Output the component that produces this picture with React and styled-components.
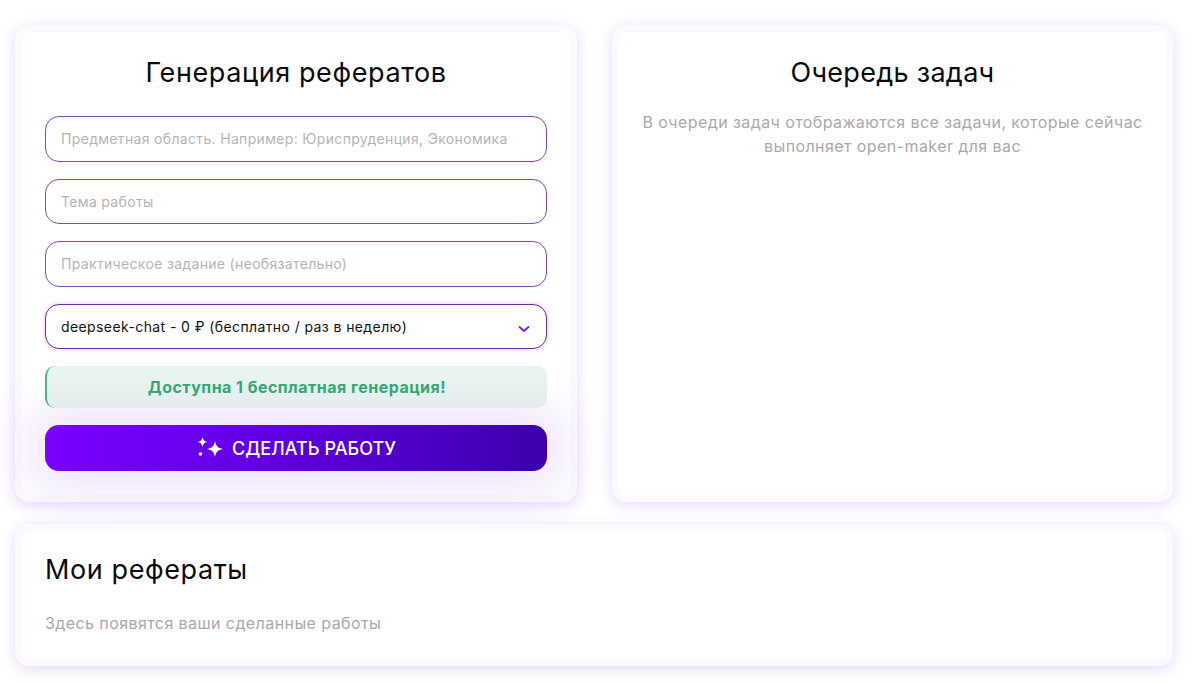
import React from 'react'
import styled, { createGlobalStyle } from 'styled-components'

const GlobalStyle = createGlobalStyle`
  html, body {
    margin: 0;
    height: 100%;
    background: #fff;
    overflow: hidden;
  }
`

const Page = styled.div`
  box-sizing: border-box;
  width: 1200px;
  height: 682px;
  padding: 25px 27px 0 15px;
  display: grid;
  grid-template-columns: 562px 561px;
  grid-template-rows: 477px 142px;
  column-gap: 35px;
  row-gap: 22px;
  font-family: "Inter", "Roboto", sans-serif;
`

const Card = styled.section`
  box-sizing: border-box;
  grid-column: ${p => (p.$wide ? '1 / 3' : 'auto')};
  padding: ${p => (p.$wide ? '27px 23px' : '29px 23px')};
  background: #fff;
  border: 7px solid #fcfaff;
  border-radius: 14px;
  background-clip: padding-box;
  box-shadow: 0 3px 14px 1px rgba(150, 80, 255, 0.2);
  position: relative;
  display: flex;
  flex-direction: column;
`

const Title = styled.h2`
  margin: 0;
  font-family: "Inter", sans-serif;
  font-weight: 400;
  font-size: 27px;
  line-height: 24px;
  letter-spacing: ${p => (p.$tight ? '0.3px' : '0.6px')};
  color: #0b0b0b;
  text-align: ${p => (p.$left ? 'left' : 'center')};
`

const Form = styled.div`
  margin-top: 31px;
  display: flex;
  flex-direction: column;
  gap: 17px;
`

const Field = styled.div`
  box-sizing: border-box;
  height: 45.6px;
  padding: 0 15px;
  border: 1.5px solid ${p => (p.$filled ? '#6f2aa5' : '#8a45b5')};
  border-radius: 14px;
  background: #fff;
  display: flex;
  align-items: center;
  justify-content: space-between;
  font-size: 14px;
  letter-spacing: ${p => (p.$filled ? '0.4px' : '0.33px')};
  color: ${p => (p.$filled ? '#111' : '#b4b4b4')};
  box-shadow: ${p => (p.$filled ? '0 0 5px rgba(190, 80, 255, 0.35)' : 'none')};
  position: relative;
  z-index: 1;
`

const Chevron = styled.svg`
  width: 14px;
  height: 14px;
  margin-top: 4px;
  fill: none;
  stroke: #7d1fd6;
  stroke-width: 1.8;
  stroke-linecap: round;
  stroke-linejoin: round;
`

const Notice = styled.div`
  box-sizing: border-box;
  height: 41.6px;
  border-left: 2px solid #45b684;
  border-radius: 10px;
  background: linear-gradient(180deg, #e9f6f0 0%, #e5ecee 100%);
  display: flex;
  align-items: center;
  justify-content: center;
  font-size: 16px;
  font-weight: 700;
  letter-spacing: 0.47px;
  color: #33a873;
  position: relative;
  z-index: 1;
`

const Submit = styled.button`
  box-sizing: border-box;
  height: 46px;
  padding: 2px 0 0;
  border: none;
  border-radius: 14px;
  background: linear-gradient(90deg, #7a00ff 0%, #6a00f0 30%, #3d00ac 100%);
  box-shadow: 0 0 50px 16px rgba(140, 60, 255, 0.16);
  display: flex;
  align-items: center;
  justify-content: center;
  gap: 8px;
  font-family: "Inter", sans-serif;
  font-size: 18px;
  font-weight: 500;
  letter-spacing: 0.05px;
  color: #fff;
`

const Sparkles = styled.svg`
  width: 28px;
  height: 24px;
  fill: #fff;
`

const Muted = styled.p`
  margin: ${p => (p.$left ? '29px 0 0' : '25px 0 0')};
  font-size: 16px;
  line-height: 24px;
  letter-spacing: 0.42px;
  color: #a9a9a9;
  text-align: ${p => (p.$left ? 'left' : 'center')};
`

export default function App() {
  return (
    <>
      <GlobalStyle />
      <Page>
        <Card>
          <Title>Генерация рефератов</Title>
          <Form>
            <Field>Предметная область. Например: Юриспруденция, Экономика</Field>
            <Field>Тема работы</Field>
            <Field>Практическое задание (необязательно)</Field>
            <Field $filled>
              deepseek-chat - 0 ₽ (бесплатно / раз в неделю)
              <Chevron viewBox="0 0 14 14">
                <path d="M2.5 5l4.5 4 4.5-4" />
              </Chevron>
            </Field>
            <Notice>Доступна 1 бесплатная генерация!</Notice>
            <Submit>
              <Sparkles viewBox="0 0 28 24">
                <path d="M19 4c1 5.200 2.800 7 8 8-5.200 1-7 2.800-8 8-1-5.200-2.800-7-8-8 5.200-1 7-2.800 8-8z" />
                <path d="M6.500 0c.6 3.200 1.800 4.400 5 5-3.200.6-4.400 1.800-5 5-.6-3.200-1.800-4.400-5-5 3.200-.6 4.400-1.800 5-5z" />
                <circle cx="4.500" cy="17" r="1.800" />
              </Sparkles>
              СДЕЛАТЬ РАБОТУ
            </Submit>
          </Form>
        </Card>
        <Card>
          <Title $tight>Очередь задач</Title>
          <Muted>
            В очереди задач отображаются все задачи, которые сейчас
            <br />
            выполняет open-maker для вас
          </Muted>
        </Card>
        <Card $wide>
          <Title $left>Мои рефераты</Title>
          <Muted $left>Здесь появятся ваши сделанные работы</Muted>
        </Card>
      </Page>
    </>
  )
}
